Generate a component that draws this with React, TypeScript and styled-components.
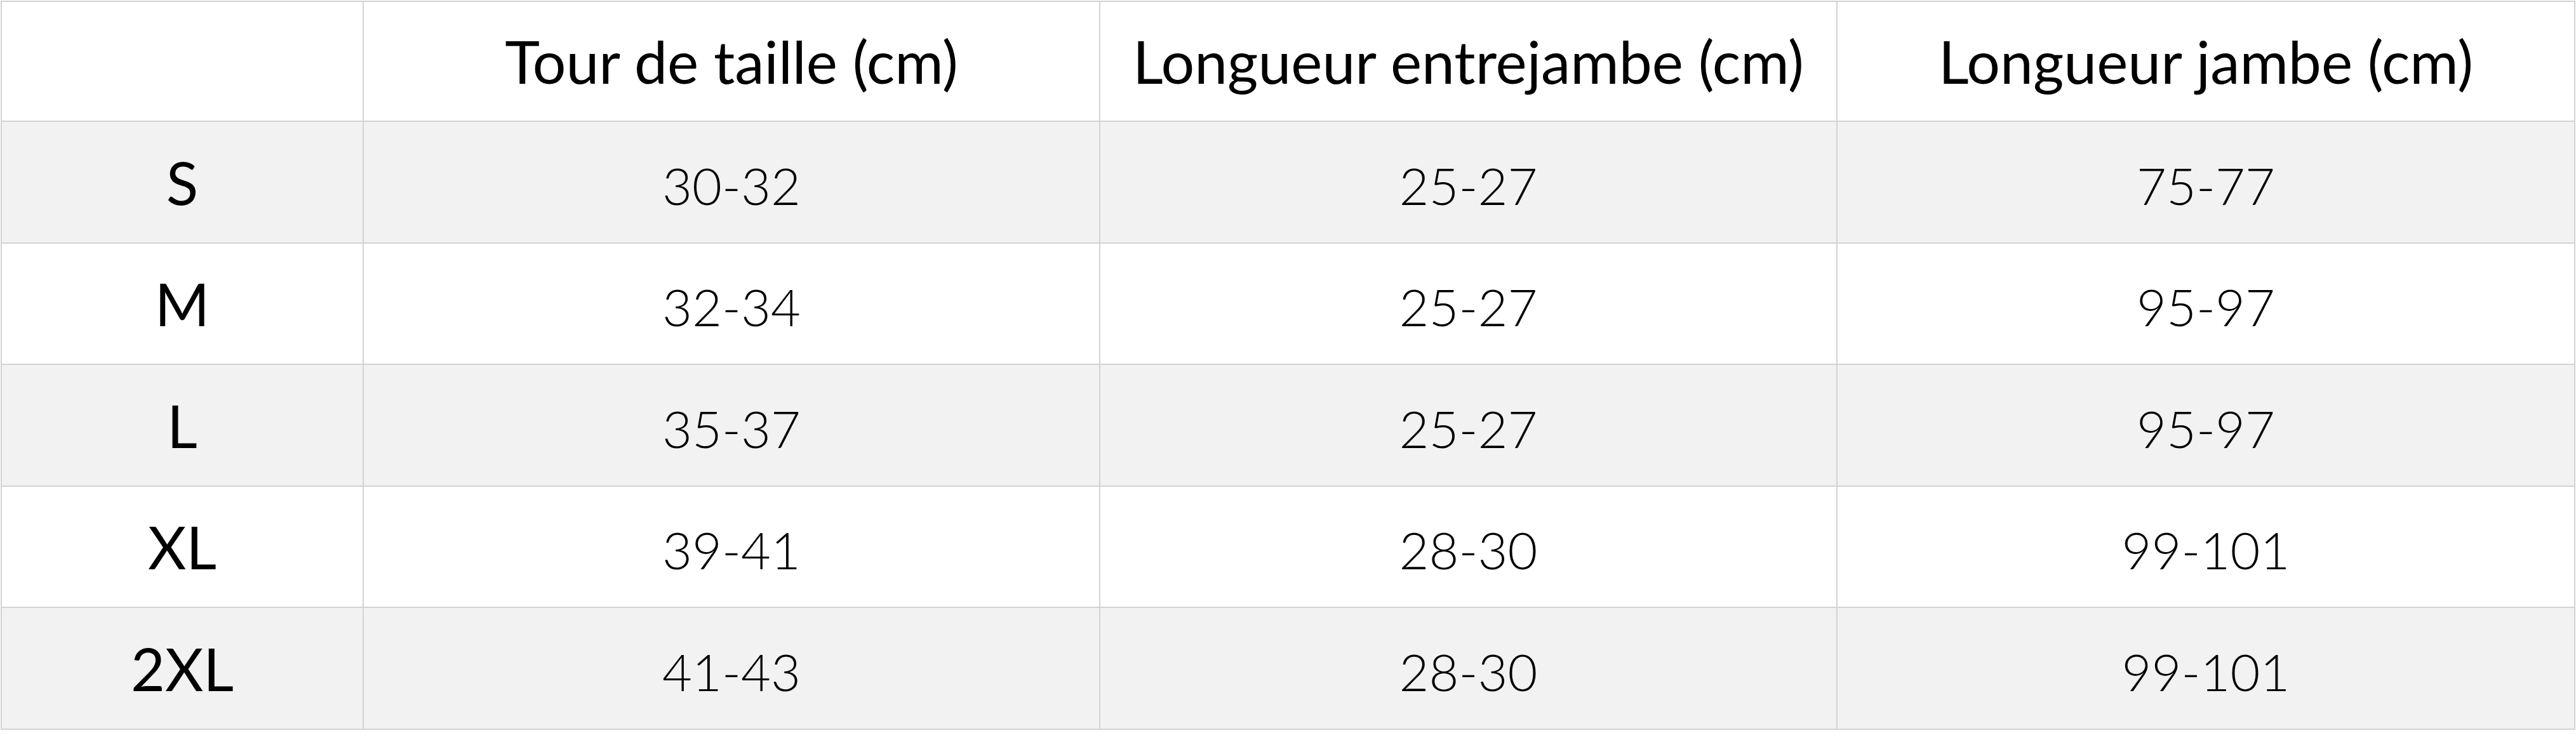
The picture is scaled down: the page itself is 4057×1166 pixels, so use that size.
import React from "react";
import styled, { createGlobalStyle } from "styled-components";

const GlobalStyle = createGlobalStyle`
  html, body {
    margin: 0;
    padding: 0;
    background: #ffffff;
  }
  body {
    font-family: "Lato", "Liberation Sans", sans-serif;
    color: #000000;
  }
`;

const SizeTable = styled.table`
  margin: 1px 0 0 1px;
  width: 4055px;
  border-collapse: separate;
  border-spacing: 0;
  table-layout: fixed;
  border-top: 2px solid #d3d3d3;
  border-left: 2px solid #d3d3d3;
`;

const Row = styled.tr<{ $shaded?: boolean; $height: number }>`
  background: ${(p) => (p.$shaded ? "#f2f2f2" : "#ffffff")};
  height: ${(p) => p.$height}px;
`;

const Cell = styled.td`
  box-sizing: border-box;
  padding: 0;
  border-right: 2px solid #d3d3d3;
  border-bottom: 2px solid #d3d3d3;
  text-align: center;
  vertical-align: middle;
  white-space: nowrap;
`;

const HeadCell = styled(Cell).attrs({ as: "th" })`
  font-family: "Lato", "Liberation Sans", sans-serif;
  font-weight: 400;
  font-size: 93px;
  line-height: 1;
`;

const SizeCell = styled(Cell).attrs({ as: "th" })`
  font-family: "Lato", "Liberation Sans", sans-serif;
  font-weight: 400;
  font-size: 93px;
  line-height: 1;
`;

const ValueCell = styled(Cell)`
  font-family: "Lato", "Liberation Sans", sans-serif;
  font-weight: 300;
  font-size: 81px;
  line-height: 1;
  padding-top: 8px;
`;

const columns = [
  "Tour de taille (cm)",
  "Longueur entrejambe (cm)",
  "Longueur jambe (cm)",
];

const colWidths = [570, 1160, 1161, 1162];

const rows: { size: string; values: string[] }[] = [
  { size: "S", values: ["30-32", "25-27", "75-77"] },
  { size: "M", values: ["32-34", "25-27", "95-97"] },
  { size: "L", values: ["35-37", "25-27", "95-97"] },
  { size: "XL", values: ["39-41", "28-30", "99-101"] },
  { size: "2XL", values: ["41-43", "28-30", "99-101"] },
];

const rowHeights = [192, 191, 192, 191, 192];

export default function App() {
  return (
    <>
      <GlobalStyle />
      <SizeTable>
        <colgroup>
          {colWidths.map((w, i) => (
            <col key={i} style={{ width: `${w}px` }} />
          ))}
        </colgroup>
        <thead>
          <Row $height={189}>
            <HeadCell />
            {columns.map((c) => (
              <HeadCell key={c}>{c}</HeadCell>
            ))}
          </Row>
        </thead>
        <tbody>
          {rows.map((r, i) => (
            <Row key={r.size} $shaded={i % 2 === 0} $height={rowHeights[i]}>
              <SizeCell>{r.size}</SizeCell>
              {r.values.map((v, j) => (
                <ValueCell key={j}>{v}</ValueCell>
              ))}
            </Row>
          ))}
        </tbody>
      </SizeTable>
    </>
  );
}
